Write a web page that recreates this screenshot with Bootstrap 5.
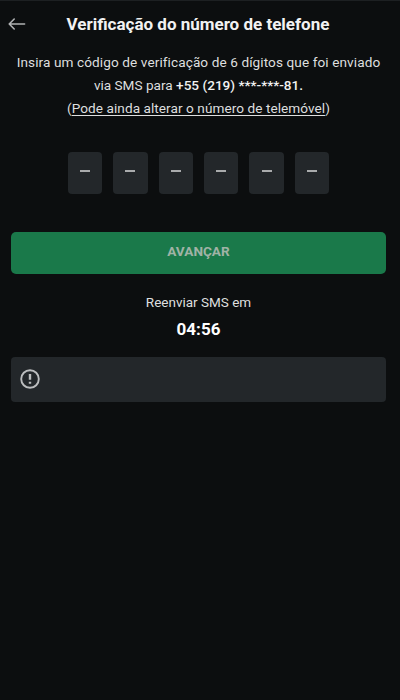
<!DOCTYPE html>
<html lang="pt">
<head>
<meta charset="utf-8">
<meta name="viewport" content="width=device-width, initial-scale=1">
<title>Verificação do número de telefone</title>
<link href="https://cdn.jsdelivr.net/npm/bootstrap@5.3.0/dist/css/bootstrap.min.css" rel="stylesheet">
<style>
body{background:#0c0e0f;color:#dedfdf;font-family:Roboto,"Liberation Sans",sans-serif;min-height:700px;overflow:hidden}
.screen{width:400px;height:700px;border-top:1px solid #1d2022;padding:0 14px 0 11px}
.topbar{height:45px;margin-left:-3px}
.back{color:#b0b2b3;width:18px;height:14px}
.title{font-size:17px;font-weight:700;color:#f2f2f2;line-height:20px;white-space:nowrap;padding-left:2px}
.intro{font-size:13.6px;line-height:22.8px;margin:5px -6px 0;white-space:nowrap}
.intro a{color:inherit;text-underline-offset:2px}
.lead-line{letter-spacing:.09px}
.change-line{letter-spacing:.06px}
.phone{font-weight:500;color:#f2f2f2}
.code{gap:11px;margin-top:33px}
.digit{width:34.4px;height:42px;border-radius:4px;background:#23272a;padding:0 0 5px}
.digit span{width:10px;height:2px;background:#a9abac}
.submit{margin-top:37.5px;height:42px;border-radius:5px;font-size:13.6px;font-weight:700;line-height:1;padding:0 0 2px}
.submit:disabled{background:#1a794a;color:#a0b3a6;opacity:1;border:0}
.resend{font-size:13.5px;line-height:20px;margin-top:18px}
.timer{font-size:17px;line-height:20px;font-weight:700;color:#fff;margin-top:7.5px}
.notice{height:45px;border-radius:4px;background:#23272a;margin-top:18px;padding:0 0 1px 9px;color:#bcbebf}
</style>
</head>
<body>
<main class="screen d-flex flex-column">
  <header class="topbar d-flex align-items-center">
    <svg class="back flex-shrink-0" viewBox="0 0 18 14" fill="none" stroke="currentColor" stroke-width="1.6" stroke-linecap="round" stroke-linejoin="round"><path d="M6.2 2 1.2 7l5 5M1.2 7h15.4"/></svg>
    <h1 class="title mb-0 flex-grow-1 text-center">Verificação do número de telefone</h1>
    <div class="back flex-shrink-0"></div>
  </header>
  <p class="intro text-center mb-0">
    <span class="lead-line">Insira um código de verificação de 6 dígitos que foi enviado</span><br>
    via SMS para <span class="phone">+55 (219) ***-***-81.</span><br>
    <span class="change-line">(<a href="#">Pode ainda alterar o número de telemóvel</a>)</span>
  </p>
  <div class="code d-flex justify-content-center">
    <div class="digit d-flex align-items-center justify-content-center"><span></span></div>
    <div class="digit d-flex align-items-center justify-content-center"><span></span></div>
    <div class="digit d-flex align-items-center justify-content-center"><span></span></div>
    <div class="digit d-flex align-items-center justify-content-center"><span></span></div>
    <div class="digit d-flex align-items-center justify-content-center"><span></span></div>
    <div class="digit d-flex align-items-center justify-content-center"><span></span></div>
  </div>
  <button class="submit btn w-100" type="button" disabled>AVANÇAR</button>
  <div class="resend text-center">Reenviar SMS em</div>
  <div class="timer text-center">04:56</div>
  <div class="notice d-flex align-items-center" role="alert">
    <svg width="20" height="20" viewBox="0 0 20 20" fill="none" stroke="currentColor" stroke-width="1.9"><circle cx="10" cy="10" r="8.8"/><path d="M10 5v5.8M10 12.7v2.1" stroke-width="2.4"/></svg>
  </div>
</main>
<script src="https://cdn.jsdelivr.net/npm/bootstrap@5.3.0/dist/js/bootstrap.bundle.min.js"></script>
</body>
</html>
